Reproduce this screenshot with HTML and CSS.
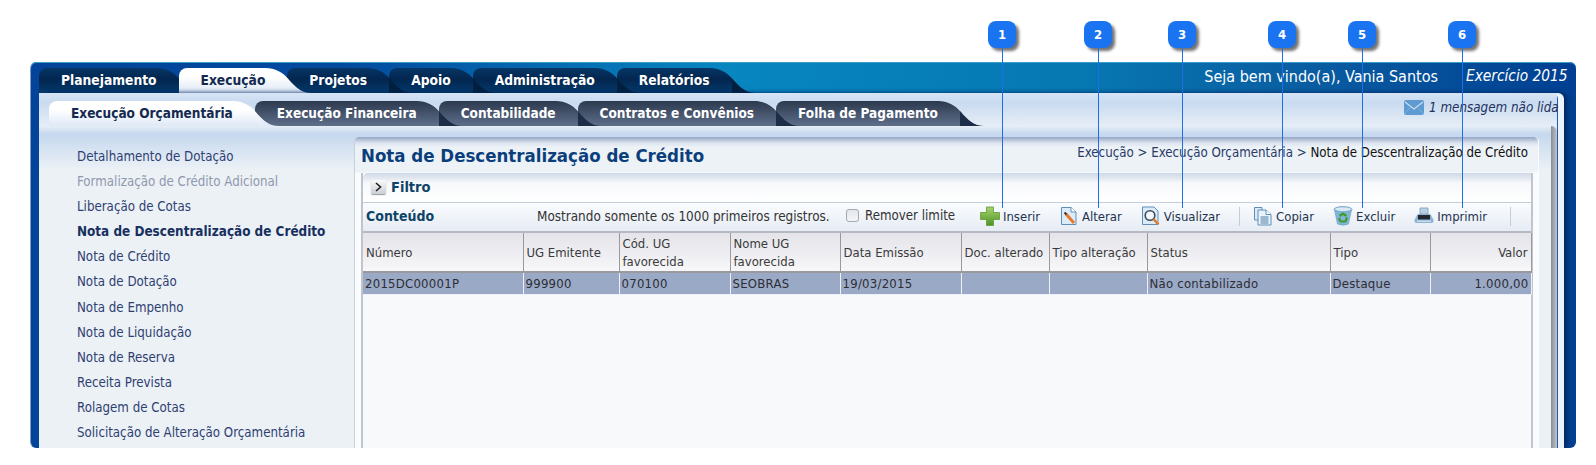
FILE: index.html
```html
<!DOCTYPE html>
<html lang="pt">
<head>
<meta charset="utf-8">
<title>Nota de Descentralização de Crédito</title>
<link rel="stylesheet" href="styles.css">
</head>
<body>
<div class="frame">
  <header class="topbar">
    <nav class="tabs">
      <a class="tab t1">Planejamento</a>
      <a class="tab t2 active">Execução</a>
      <a class="tab t3">Projetos</a>
      <a class="tab t4">Apoio</a>
      <a class="tab t5">Administração</a>
      <a class="tab t6">Relatórios</a>
    </nav>
    <div class="welcome">Seja bem vindo(a), Vania Santos</div>
    <div class="year">Exercício 2015</div>
  </header>
  <div class="workspace">
    <div class="subbar">
      <nav class="tabs subtabs">
        <a class="tab t1 active">Execução Orçamentária</a>
        <a class="tab t2">Execução Financeira</a>
        <a class="tab t3">Contabilidade</a>
        <a class="tab t4">Contratos e Convênios</a>
        <a class="tab t5">Folha de Pagamento</a>
      </nav>
      <div class="message">
        <svg class="envelope" viewBox="0 0 20 15" width="20" height="15"><rect width="20" height="15" rx="2" fill="#5f9bd0"/><path d="M1 2 L10 9 L19 2" fill="none" stroke="#c5dcf0" stroke-width="1.2"/><path d="M0 14 L7 7 M20 14 L13 7" stroke="#7fb0dc" stroke-width="1"/></svg>
        <span>1 mensagem não lida</span>
      </div>
    </div>
    <div class="main">
      <aside class="sidebar">
        <a class="side-item">Detalhamento de Dotação</a>
        <a class="side-item disabled">Formalização de Crédito Adicional</a>
        <a class="side-item">Liberação de Cotas</a>
        <a class="side-item current">Nota de Descentralização de Crédito</a>
        <a class="side-item">Nota de Crédito</a>
        <a class="side-item">Nota de Dotação</a>
        <a class="side-item">Nota de Empenho</a>
        <a class="side-item">Nota de Liquidação</a>
        <a class="side-item">Nota de Reserva</a>
        <a class="side-item">Receita Prevista</a>
        <a class="side-item">Rolagem de Cotas</a>
        <a class="side-item">Solicitação de Alteração Orçamentária</a>
      </aside>
      <section class="shell">
        <div class="panel">
          <div class="titlebar">
            <h1 class="title">Nota de Descentralização de Crédito</h1>
            <div class="crumbs"><span>Execução &gt; Execução Orçamentária &gt; </span><b>Nota de Descentralização de Crédito</b></div>
          </div>
          <div class="box">
            <div class="filter">
              <span class="toggle"><svg viewBox="0 0 15 14" width="15" height="14"><path d="M5 3 L9.5 7 L5 11" fill="none" stroke="#222" stroke-width="1.6"/></svg></span>
              <span class="filter-label">Filtro</span>
            </div>
            <div class="toolbar">
              <span class="content-label">Conteúdo</span>
              <span class="limit">Mostrando somente os 1000 primeiros registros.</span>
              <span class="checkbox"></span>
              <span class="remove">Remover limite</span>
              <div class="tools">
                <a class="tool">
                  <svg viewBox="0 0 20 20" width="20" height="20"><defs><linearGradient id="g" x1="0" y1="0" x2="0" y2="1"><stop offset="0" stop-color="#a9d36c"/><stop offset="1" stop-color="#4c9426"/></linearGradient></defs><path d="M6.5 1 H13.5 V6.5 H19.5 V13.5 H13.5 V19.5 H6.5 V13.5 H.5 V6.5 H6.5 Z" fill="url(#g)" stroke="#5c9a38" stroke-width=".8"/></svg>
                  Inserir</a>
                <a class="tool">
                  <svg viewBox="0 0 20 20" width="20" height="20"><path d="M2.5 1.5 H12 L17 6 V18.5 H2.5 Z" fill="#dcebf8" stroke="#5f8fb8"/><path d="M12 1.5 V6 H17" fill="#fff" stroke="#5f8fb8"/><path d="M7 8 L15 17" stroke="#e8792b" stroke-width="3"/><path d="M5.5 6.5 L7.5 8.5" stroke="#333" stroke-width="2"/></svg>
                  Alterar</a>
                <a class="tool">
                  <svg viewBox="0 0 20 20" width="20" height="20"><path d="M1.5 1 H13 L17 5 V18.5 H1.5 Z" fill="#dcebf8" stroke="#5f8fb8"/><circle cx="9" cy="9.5" r="4.8" fill="#f4f8fc" stroke="#3c4a58" stroke-width="1.6"/><path d="M12.5 13 L17.5 18.5" stroke="#e07a30" stroke-width="2.6"/></svg>
                  Visualizar</a>
                <span class="sep"></span>
                <a class="tool first">
                  <svg viewBox="0 0 20 20" width="20" height="20"><path d="M1.5 1.5 H9 V14 H1.5 Z" fill="#dcebf8" stroke="#5f8fb8"/><path d="M5 4 H13 L18 8.5 V19 H5 Z" fill="#eaf3fb" stroke="#5f8fb8"/><path d="M13 4 V8.5 H18" fill="#fff" stroke="#5f8fb8"/><path d="M7.5 11 H15.5 M7.5 13 H15.5 M7.5 15 H15.5 M7.5 17 H15.5" stroke="#4d7fa8"/></svg>
                  Copiar</a>
                <a class="tool">
                  <svg viewBox="0 0 20 20" width="20" height="20"><ellipse cx="10" cy="3.5" rx="9" ry="2.8" fill="#d8e9f5" stroke="#6d9cc0"/><path d="M1.5 4 L4.5 18 Q10 20.5 15.5 18 L18.5 4 Q10 7.5 1.5 4 Z" fill="#7fb6d8" stroke="#6d9cc0" stroke-width=".6"/><path d="M6.5 10 L10 7.5 L13.5 10 M14 11.5 L12.5 15.5 H7.5 M6 12 L7.5 15.5" fill="none" stroke="#3f9a28" stroke-width="2.2"/></svg>
                  Excluir</a>
                <a class="tool">
                  <svg viewBox="0 0 20 20" width="20" height="20"><path d="M6 2 H14 V8 H6 Z" fill="#b9cfe4" stroke="#7c9cba" stroke-width=".8"/><path d="M3 9 Q3 8 5 8 H15 Q17 8 17 9 L19.5 14 Q20 17 17 17 H3 Q0 17 .5 14 Z" fill="#8db2d4"/><rect x="4" y="9" width="12" height="4.5" fill="#23282f"/><rect x="3" y="14.5" width="14" height="1.5" fill="#c6dbee"/></svg>
                  Imprimir</a>
                <span class="sep last"></span>
              </div>
            </div>
            <div class="grid-wrap">
              <table class="grid">
                <colgroup>
                  <col class="c-num"><col class="c-ug"><col class="c-cod"><col class="c-nome"><col class="c-data"><col class="c-doc"><col class="c-talt"><col class="c-status"><col class="c-tipo"><col class="c-valor">
                </colgroup>
                <thead>
                  <tr>
                    <th>Número</th><th>UG Emitente</th><th>Cód. UG<br>favorecida</th><th>Nome UG<br>favorecida</th><th>Data Emissão</th><th>Doc. alterado</th><th>Tipo alteração</th><th>Status</th><th>Tipo</th><th class="num">Valor</th>
                  </tr>
                </thead>
                <tbody>
                  <tr>
                    <td>2015DC00001P</td><td>999900</td><td>070100</td><td>SEOBRAS</td><td>19/03/2015</td><td></td><td></td><td>Não contabilizado</td><td>Destaque</td><td class="num">1.000,00</td>
                  </tr>
                </tbody>
              </table>
            </div>
          </div>
        </div>
      </section>
    </div>
  </div>
</div>
<div class="callouts">
  <span class="callout p1">1</span>
  <span class="callout p2">2</span>
  <span class="callout p3">3</span>
  <span class="callout p4">4</span>
  <span class="callout p5">5</span>
  <span class="callout p6">6</span>
</div>
</body>
</html>
```
FILE: styles.css
```css
* { box-sizing: border-box; }
html, body { margin: 0; height: 465px; overflow: hidden; background: #fff; }
body {
  position: relative;
  padding: 62px 20px 17px 30px;
  font-family: "DejaVu Sans Condensed", "Noto Sans", sans-serif;
  font-stretch: condensed;
  font-size: 13px;
  color: #333;
}
.frame {
  height: 386px;
  display: flex;
  flex-direction: column;
  overflow: hidden;
  border-radius: 6px;
  border-left: 1px solid #7f9cc6;
  background: linear-gradient(90deg, #03449a 0, #034a9e 20%, #0786c0 45%, #0678b2 68%, #0a5ea2 82%, #003f92 100%);
  box-shadow: inset 0 1px 0 #3a9cc8;
}
.topbar { height: 31px; flex: none; display: flex; align-items: flex-end; padding-left: 8px; color: #fff; }
.tabs { display: flex; align-items: flex-end; height: 25px; isolation: isolate; }
.tab {
  position: relative;
  height: 25px;
  line-height: 25px;
  padding: 0 22px;
  white-space: nowrap;
  font-weight: 700;
  font-size: 13.7px;
  color: #fff;
}
.tab::before, .tab::after {
  content: "";
  position: absolute;
  top: 0;
  bottom: 0;
  z-index: -1;
}
.tab::before { left: 0; right: 21px; border-radius: 8px 0 0 0; background: linear-gradient(#073666, #02264f 45%, #053a6c); }
.tab::after {
  left: calc(100% - 22px);
  width: 46px;
  clip-path: path("M0 0 C10 0 17 4 23 11 C30 19 36 25 46 25 L0 25 Z");
  background:
    linear-gradient(90deg, transparent 22px, #01203f 22px),
    linear-gradient(#073666, #02264f 45%, #053a6c);
}
.tab.t1 { z-index: 6; }
.tab.t2 { z-index: 5; }
.tab.t3 { z-index: 4; }
.tab.t4 { z-index: 3; }
.tab.t5 { z-index: 2; }
.tab.t6 { z-index: 1; }
.tab.active { z-index: 9; color: #14294f; }
.tab.active::before, .tab.active::after { background: linear-gradient(#fff 35%, #dce7f6); }
.welcome { margin-left: auto; height: 29px; line-height: 25px; font-size: 16px; white-space: nowrap; }
.year { width: 138px; padding-left: 28px; height: 29px; line-height: 25px; font-size: 15.3px; font-style: italic; white-space: nowrap; }
.workspace {
  flex: 1;
  min-height: 0;
  margin: 0 18px 0 8px;
  display: flex;
  flex-direction: column;
  border-right: 1px solid #1a5cc0;
  box-shadow: 6px 0 0 #edf3fa, 9px 0 5px #00265c;
  border-top-right-radius: 6px;
  background: #ecf1f6;
  position: relative;
}
.subbar {
  height: 33px;
  flex: none;
  display: flex;
  padding: 8px 0 0 10px;
  background: linear-gradient(#d6e4f5, #c9dbf0 30%, #e6eef7);
}
.subtabs .tab { font-size: 13.5px; }
.subtabs .tab::before { background: linear-gradient(#2c394e, #5f6f8a); }
.subtabs .tab::after {
  background:
    linear-gradient(90deg, transparent 22px, #1e2d47 22px),
    linear-gradient(#2c394e, #5f6f8a);
}
.subtabs .tab.active::before, .subtabs .tab.active::after { background: linear-gradient(#fff 35%, #dfe9f6); }
.message {
  margin-left: auto;
  margin-top: -2px;
  display: flex;
  align-items: flex-start;
  gap: 5px;
  width: 153px;
  height: 18px;
  font-style: italic;
  font-size: 13.3px;
  line-height: 18px;
  white-space: nowrap;
  color: #22315e;
}
.envelope { flex: none; margin-top: 1px; }
.main {
  flex: 1;
  min-height: 0;
  display: flex;
  background: linear-gradient(#e6eef7, #c5d8ee 8px, #ecf1f6 44px);
}
.sidebar {
  width: 315px;
  flex: none;
  padding: 18px 0 0 38px;
  display: flex;
  flex-direction: column;
  font-size: 13.2px;
}
.side-item { height: 25.1px; line-height: 25px; color: #2f3f72; white-space: nowrap; }
.side-item.disabled { color: #9098ae; }
.side-item.current { font-weight: 700; font-size: 13.4px; color: #18305f; }
.shell {
  flex: 1;
  min-width: 0;
  display: flex;
  padding: 11px 18px 0 0;
  border-top-right-radius: 6px;
  background: linear-gradient(90deg, #8a8d92, #c0c3c8) right top / 6px 100% no-repeat;
}
.panel {
  flex: 1;
  min-width: 0;
  display: flex;
  flex-direction: column;
  border-left: 1px solid #c8d0dc;
  border-right: 1px solid #fbfcfe;
  border-radius: 5px 5px 0 0;
  background: linear-gradient(#95a4c3, #b9c5d9 3px, #dbe3ee 6px, #edf2f7 10px, #edf2f7 35px, #fafbfd 36px);
}
.titlebar { height: 36px; flex: none; display: flex; align-items: center; justify-content: space-between; padding: 0 10px 0 6px; }
.title { margin: 0; font-size: 18.5px; font-weight: 700; color: #0b3f7c; white-space: nowrap; }
.crumbs { font-size: 13.2px; margin-top: -5px; color: #2a3a68; white-space: nowrap; }
.crumbs b { font-weight: 400; color: #111; }
.box {
  flex: 1;
  min-height: 0;
  margin: 0 5px 0 6px;
  display: flex;
  flex-direction: column;
  border-left: 2px solid #c0c4cf;
  border-right: 2px solid #c0c4cf;
  background: #f8f9fb;
}
.filter {
  height: 30px;
  flex: none;
  display: flex;
  align-items: center;
  gap: 5px;
  padding: 0 0 1px 8px;
  border-bottom: 1px solid #c5cddb;
  border-top-left-radius: 5px;
  background: linear-gradient(#cfd8e6, #f6f8fb 10px, #fff);
}
.toggle { width: 15px; height: 14px; display: block; border-radius: 2px; background: linear-gradient(#fafafa, #c9ced6); box-shadow: 0 1px 1px #999; }
.toggle svg { display: block; }
.filter-label { font-weight: 700; font-size: 14.5px; color: #0e4367; }
.toolbar {
  height: 30px;
  flex: none;
  display: flex;
  align-items: center;
  padding: 0 0 2px 3px;
  border-bottom: 2px solid #b5b9c1;
  background: linear-gradient(#fafcfe, #e6ecf4);
}
.content-label { width: 171px; font-weight: 700; font-size: 14px; color: #0e4367; }
.limit { width: 309px; font-size: 13.4px; color: #333; white-space: nowrap; }
.checkbox { width: 13px; height: 13px; margin-top: -2px; border: 1px solid #a4a8b0; border-radius: 3px; background: linear-gradient(#e4e6ea, #f4f5f7); }
.remove { margin: -2px 0 0 6px; width: 115px; font-size: 13.2px; color: #333; white-space: nowrap; }
.tools { display: flex; align-items: center; gap: 19px; }
.tool { display: flex; align-items: center; gap: 3px; color: #1f3350; white-space: nowrap; }
.tool svg { display: block; flex: none; }
.sep { width: 1px; height: 19px; background: #c4ccd8; }
.sep.last { margin-left: 4px; }
.tool.first { margin-left: -6px; }
.grid-wrap { flex: 1; min-height: 0; background: #f8f9fb; }
.grid { width: 100%; table-layout: fixed; border-collapse: collapse; color: #3a3a3a; }
.c-num { width: 160px; } .c-ug { width: 96px; } .c-cod { width: 111px; } .c-nome { width: 110px; } .c-data { width: 121px; }
.c-doc { width: 88px; } .c-talt { width: 98px; } .c-status { width: 183px; } .c-tipo { width: 100px; } .c-valor { width: 101px; }
.grid th {
  height: 39px;
  padding: 1px 3px 0;
  line-height: 18px;
  font-weight: 400;
  text-align: left;
  white-space: nowrap;
  overflow: hidden;
  border-right: 1px solid #9a9a9e;
  border-bottom: 2px solid #9a9a9e;
  background: linear-gradient(#e3e3e9, #f7f7f9);
}
.grid td {
  height: 22px;
  padding: 0 2px;
  line-height: 21px;
  white-space: nowrap;
  border-right: 1px solid #eef0f5;
  border-bottom: 1px solid #eef0f5;
  background: #9aa9c6;
  color: #2d2d33;
  letter-spacing: .25px;
}
.grid .num { text-align: right; }
.callouts { position: absolute; inset: 0; pointer-events: none; }
.callout {
  position: absolute;
  top: 21px;
  width: 28px;
  height: 27px;
  margin-left: -14px;
  line-height: 27px;
  text-align: center;
  border-radius: 8px;
  background: #1a73f0;
  color: #fff;
  font-weight: 700;
  font-size: 13px;
  box-shadow: 3px 3px 3px rgba(40, 40, 40, .65);
}
.callout::after {
  content: "";
  position: absolute;
  top: 27px;
  left: 14px;
  width: 1px;
  height: 160px;
  background: #1b6fe8;
}
.p1 { left: 1002px; } .p2 { left: 1098px; } .p3 { left: 1182px; } .p4 { left: 1282px; } .p5 { left: 1362px; } .p6 { left: 1462px; }
```
